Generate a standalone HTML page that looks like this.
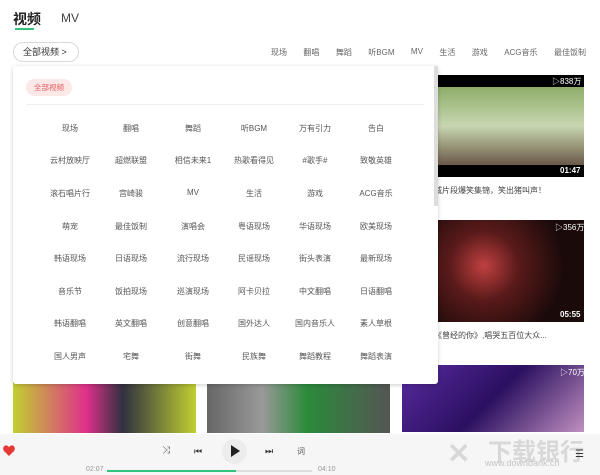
<!DOCTYPE html>
<html><head><meta charset="utf-8"><style>
*{margin:0;padding:0;box-sizing:border-box}
body{width:600px;height:475px;overflow:hidden;background:#fff;font-family:"Liberation Sans","Noto Sans CJK SC",sans-serif;position:relative;color:#333}
.abs{position:absolute}
.tab1{left:13px;top:9px;font-size:14px;font-weight:bold;color:#222}
.tab2{left:61px;top:11px;font-size:12px;color:#444}
.ul{left:15px;top:28px;width:19px;height:2px;background:#31c27c}
.btn{left:13px;top:42px;width:66px;height:20px;border:1px solid #d8d8d8;border-radius:10px;font-size:9px;line-height:18px;padding-left:9px;color:#333}
.cats{top:47px;font-size:8px;color:#666}
.thumb{background:#333}
.panel{left:13px;top:66px;width:425px;height:318px;background:#fff;box-shadow:0 1px 4px rgba(0,0,0,.2);border-radius:3px}
.pill{left:13px;top:13px;width:46px;height:17px;border-radius:9px;background:#fde8e8;color:#e85a5a;font-size:7.5px;line-height:17px;text-align:center}
.hr{left:13px;top:38px;width:398px;height:1px;background:#eee}
.g{font-size:8px;color:#555;width:70px;text-align:center;transform:translateX(-35px)}
.bar{left:0;top:434px;width:600px;height:41px;background:#f6f6f6}
.t{font-size:8px;color:#fff}
</style></head><body>
<div class="abs tab1">视频</div><div class="abs tab2">MV</div><div class="abs ul"></div>
<div class="abs btn">全部视频 &gt;</div>
<div class="abs cats" style="left:236px;width:350px;display:flex;justify-content:space-between"><span style="margin-left:35px">现场</span><span>翻唱</span><span>舞蹈</span><span>听BGM</span><span>MV</span><span>生活</span><span>游戏</span><span>ACG音乐</span><span>最佳饭制</span></div>

<div class="abs thumb" style="left:402px;top:75px;width:182px;height:102px;background:linear-gradient(#000 0 12%,#8fae6a 12%,#c8d6b0 50%,#6b5a48 88%,#000 88%)"></div>
<div class="abs t" style="left:552px;top:76px">▷838万</div>
<div class="abs t" style="left:560px;top:166px;font-weight:bold">01:47</div>
<div class="abs" style="left:402px;top:185px;font-size:8px;color:#444">影信》删减片段爆笑集锦，笑出猪叫声！</div>
<div class="abs" style="left:402px;top:200px;font-size:7px;color:#bbb">土特</div>
<div class="abs thumb" style="left:402px;top:220px;width:182px;height:102px;background:radial-gradient(circle at 45% 45%,#c04040 0,#5a1a1a 30%,#1a0a0a 70%)"></div>
<div class="abs t" style="left:555px;top:222px">▷356万</div>
<div class="abs t" style="left:560px;top:310px;font-weight:bold">05:55</div>
<div class="abs" style="left:402px;top:330px;font-size:8px;color:#444">许巍金曲《曾经的你》,唱哭五百位大众...</div>
<div class="abs" style="left:402px;top:345px;font-size:7px;color:#bbb">乐空间</div>
<div class="abs thumb" style="left:402px;top:365px;width:182px;height:67px;background:linear-gradient(135deg,#5a2aa0,#2a1060 50%,#c090c0)"></div>
<div class="abs t" style="left:560px;top:367px">▷70万</div>
<div class="abs thumb" style="left:13px;top:380px;width:183px;height:53px;background:linear-gradient(90deg,#c0d030,#e0308a 40%,#303040 60%,#c0d030)"></div>
<div class="abs thumb" style="left:207px;top:380px;width:183px;height:53px;background:linear-gradient(90deg,#666,#999 30%,#2a8a3a 55%,#555)"></div>

<div class="abs panel">
<div class="abs pill">全部视频</div><div class="abs hr"></div>
<div class="abs" style="right:0;top:0;width:4px;height:140px;background:#ddd"></div>
</div>
<div class="abs" style="left:0;top:0">
<div class="abs g" style="left:70px;top:123px">现场</div><div class="abs g" style="left:131px;top:123px">翻唱</div><div class="abs g" style="left:193px;top:123px">舞蹈</div><div class="abs g" style="left:254px;top:123px">听BGM</div><div class="abs g" style="left:315px;top:123px">万有引力</div><div class="abs g" style="left:376px;top:123px">告白</div>
<div class="abs g" style="left:70px;top:155px">云村放映厅</div><div class="abs g" style="left:131px;top:155px">超燃联盟</div><div class="abs g" style="left:193px;top:155px">相信未来1</div><div class="abs g" style="left:254px;top:155px">热歌看得见</div><div class="abs g" style="left:315px;top:155px">#歌手#</div><div class="abs g" style="left:376px;top:155px">致敬英雄</div>
<div class="abs g" style="left:70px;top:188px">滚石唱片行</div><div class="abs g" style="left:131px;top:188px">宫崎骏</div><div class="abs g" style="left:193px;top:188px">MV</div><div class="abs g" style="left:254px;top:188px">生活</div><div class="abs g" style="left:315px;top:188px">游戏</div><div class="abs g" style="left:376px;top:188px">ACG音乐</div>
<div class="abs g" style="left:70px;top:221px">萌宠</div><div class="abs g" style="left:131px;top:221px">最佳饭制</div><div class="abs g" style="left:193px;top:221px">演唱会</div><div class="abs g" style="left:254px;top:221px">粤语现场</div><div class="abs g" style="left:315px;top:221px">华语现场</div><div class="abs g" style="left:376px;top:221px">欧美现场</div>
<div class="abs g" style="left:70px;top:253px">韩语现场</div><div class="abs g" style="left:131px;top:253px">日语现场</div><div class="abs g" style="left:193px;top:253px">流行现场</div><div class="abs g" style="left:254px;top:253px">民谣现场</div><div class="abs g" style="left:315px;top:253px">街头表演</div><div class="abs g" style="left:376px;top:253px">最新现场</div>
<div class="abs g" style="left:70px;top:286px">音乐节</div><div class="abs g" style="left:131px;top:286px">饭拍现场</div><div class="abs g" style="left:193px;top:286px">巡演现场</div><div class="abs g" style="left:254px;top:286px">阿卡贝拉</div><div class="abs g" style="left:315px;top:286px">中文翻唱</div><div class="abs g" style="left:376px;top:286px">日语翻唱</div>
<div class="abs g" style="left:70px;top:318px">韩语翻唱</div><div class="abs g" style="left:131px;top:318px">英文翻唱</div><div class="abs g" style="left:193px;top:318px">创意翻唱</div><div class="abs g" style="left:254px;top:318px">国外达人</div><div class="abs g" style="left:315px;top:318px">国内音乐人</div><div class="abs g" style="left:376px;top:318px">素人草根</div>
<div class="abs g" style="left:70px;top:351px">国人男声</div><div class="abs g" style="left:131px;top:351px">宅舞</div><div class="abs g" style="left:193px;top:351px">街舞</div><div class="abs g" style="left:254px;top:351px">民族舞</div><div class="abs g" style="left:315px;top:351px">舞蹈教程</div><div class="abs g" style="left:376px;top:351px">舞蹈表演</div>
</div>

<div class="abs bar">
<svg class="abs" style="left:3px;top:11px" width="12" height="11" viewBox="0 0 12 11"><path d="M6 11L1 6C-1 3.5 1-.5 4 .5 5 1 6 2 6 2S7 1 8 .5C11-.5 13 3.5 11 6Z" fill="#e53935"/></svg>
<div class="abs" style="left:162px;top:11px;font-size:10px;color:#555">⤨</div>
<div class="abs" style="left:194px;top:12px;font-size:9px;color:#333">⏮</div>
<div class="abs" style="left:222px;top:5px;width:25px;height:25px;border-radius:50%;background:#ececec"></div>
<div class="abs" style="left:231px;top:11px;width:0;height:0;border-left:9px solid #222;border-top:6px solid transparent;border-bottom:6px solid transparent"></div>
<div class="abs" style="left:265px;top:12px;font-size:9px;color:#333">⏭</div>
<div class="abs" style="left:297px;top:12px;font-size:8px;color:#555">词</div>
<div class="abs" style="left:86px;top:32px;font-size:7px;color:#999">02:07</div>
<div class="abs" style="left:107px;top:36px;width:205px;height:2px;background:#ddd"></div>
<div class="abs" style="left:107px;top:36px;width:129px;height:2px;background:#31c27c"></div>
<div class="abs" style="left:318px;top:32px;font-size:7px;color:#999">04:10</div>
<div class="abs" style="left:447px;top:3px;font-size:28px;color:#d8d8d8;font-weight:bold">✕</div>
<div class="abs" style="left:488px;top:-2px;font-size:24px;color:#d8d8d8;font-weight:bold">下载银行</div>
<div class="abs" style="left:485px;top:24px;font-size:9px;color:#c4c4c4">www.downbank.cn</div>
<div class="abs" style="left:575px;top:15px;font-size:10px;color:#333">☰</div>
</div>
</body></html>
